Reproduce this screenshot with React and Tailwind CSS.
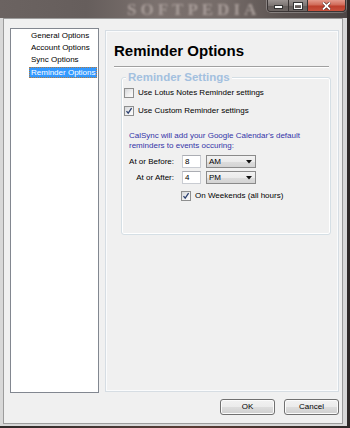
import React from "react";

function Check({ checked }) {
  return (
    <div className="w-[10px] h-[10px] shrink-0 border border-[#8e8f8f] bg-[linear-gradient(135deg,#d4d6d9_0%,#f2f2f2_60%,#fbfbfb_100%)] flex items-center justify-center">
      {checked && (
        <svg width="8" height="8" viewBox="0 0 8 8">
          <path d="M1.5 4.2 L3.2 6.2 L6.6 1.2" fill="none" stroke="#2c4170" strokeWidth="1.3" />
        </svg>
      )}
    </div>
  );
}

function Select({ value }) {
  return (
    <div className="ml-[5px] w-[50px] h-[13px] border border-[#8a8a8a] bg-[linear-gradient(180deg,#f2f2f2_0%,#ebebeb_50%,#dddddd_51%,#d3d3d3_100%)] flex items-center justify-between pl-[2px] pr-[3px]">
      <span>{value}</span>
      <svg width="6" height="4" viewBox="0 0 6 4">
        <path d="M0 0 L6 0 L3 3.5 Z" fill="#111" />
      </svg>
    </div>
  );
}

function Input({ value }) {
  return (
    <div className="ml-[8px] w-[19px] h-[13px] bg-white border border-[#c9ccd2] border-t-[#abadb3] flex items-center pl-[2px]">
      {value}
    </div>
  );
}

function Button({ children }) {
  return (
    <div className="w-[55px] h-[16px] rounded-[3px] border border-[#707070] bg-[linear-gradient(180deg,#f2f2f2_0%,#ebebeb_50%,#dddddd_51%,#cfcfcf_100%)] shadow-[inset_0_0_0_1px_#fbfbfb] flex items-center justify-center">
      {children}
    </div>
  );
}

export default function App() {
  return (
    <div className="w-[350px] h-[428px] overflow-hidden bg-[linear-gradient(90deg,#2f2a29_0%,#4a3a36_35%,#5a3c34_55%,#2e2928_100%)] font-['Liberation_Sans',Arial,sans-serif] text-[8px] leading-[10px] text-black">
      <div className="w-[347px] flex flex-col">
        {/* Title bar */}
        <div className="relative h-[18px] bg-[linear-gradient(90deg,#6b6361_0%,#665e5c_25%,#7b716e_45%,#756b68_65%,#5a5250_82%,#4d4645_100%)] flex justify-end items-start">
          <div className="absolute left-[127px] top-[2px] text-[17px] leading-[15px] font-bold font-['Liberation_Serif',serif] tracking-[4px] text-[#a89d99] blur-[1px]">
            SOFTPEDIA
          </div>
          <div className="relative flex mr-[1px] h-[12px] rounded-b-[4px] border border-t-0 border-[#3a3535] overflow-hidden shadow-[0_0_0_1px_rgba(255,255,255,0.25)]">
            <div className="w-[21px] h-full bg-[linear-gradient(180deg,#9a9391_0%,#7c7573_50%,#625b59_51%,#6e6765_100%)] border-r border-[#3a3535] flex items-center justify-center">
              <div className="w-[7px] h-[2px] bg-white mt-[3px] shadow-[0_0_0_1px_#333]" />
            </div>
            <div className="w-[19px] h-full bg-[linear-gradient(180deg,#9a9391_0%,#7c7573_50%,#625b59_51%,#6e6765_100%)] border-r border-[#3a3535] flex items-center justify-center">
              <div className="w-[8px] h-[6px] border border-white border-t-2 shadow-[0_0_0_1px_#333]" />
            </div>
            <div className="w-[37px] h-full bg-[linear-gradient(180deg,#e49a8c_0%,#d06a58_45%,#bd3f2c_55%,#c8513d_100%)] flex items-center justify-center">
              <svg width="9" height="8" viewBox="0 0 9 8">
                <path d="M1 0.5 L8 7.5 M8 0.5 L1 7.5" stroke="#4a1a12" strokeWidth="3" />
                <path d="M1 0.5 L8 7.5 M8 0.5 L1 7.5" stroke="#ffffff" strokeWidth="1.8" />
              </svg>
            </div>
          </div>
        </div>

        {/* Frame */}
        <div className="border-l-[3px] border-r-[4px] border-b-[2px] border-[#d8d8d8]">
          <div className="h-[406px] border border-[#9c9c9c] bg-[#f0f0f0] flex flex-col pl-[6px] pr-[2px] pt-[9px]">
            <div className="flex items-start">
              {/* List box */}
              <div className="w-[89px] h-[365px] shrink-0 border border-[#828790] bg-white pt-[1px] pl-[18px]">
                {["General Options", "Account Options", "Sync Options"].map((t) => (
                  <div key={t} className="h-[12px] flex items-center">
                    <span className="px-[1px] border border-transparent">{t}</span>
                  </div>
                ))}
                <div className="h-[12px] flex items-center">
                  <span className="px-[1px] leading-[9px] bg-[#3399ff] text-white border border-dotted border-[#b07a40]">
                    Reminder Options
                  </span>
                </div>
              </div>

              {/* Right panel */}
              <div className="ml-[6px] mt-[2px] w-[234px] h-[362px] border border-[#d6dde3] shadow-[inset_0_0_0_1px_#fafbfc] pt-[11px] pl-[8px]">
                <div className="text-[15px] leading-[18px] font-bold">Reminder Options</div>
                <div className="mt-[6px] w-[215px] h-[2px] border-t border-[#a0a0a0] border-b border-b-white" />

                {/* Group box */}
                <div className="relative mt-[9px] ml-[7px] w-[210px] h-[158px] border border-[#d5dfe5] rounded-[3px] shadow-[inset_0_0_0_1px_#ffffff] pt-[9px]">
                  <div className="absolute left-[4px] top-[-7px] px-[2px] bg-[#f0f0f0] text-[11.5px] leading-[13px] font-bold text-[#a3c0df]">
                    Reminder Settings
                  </div>
                  <div className="h-[12px] flex items-center pl-[2px]">
                    <Check />
                    <span className="ml-[4px]">Use Lotus Notes Reminder settings</span>
                  </div>
                  <div className="mt-[6px] h-[12px] flex items-center pl-[2px]">
                    <Check checked />
                    <span className="ml-[4px]">Use Custom Reminder settings</span>
                  </div>
                  <div className="mt-[14px] pl-[7px] text-[#3434a8]">
                    <div>CalSync will add your Google Calendar's default</div>
                    <div>reminders to events occuring:</div>
                  </div>
                  <div className="mt-[4px] h-[13px] flex items-center pl-[7px]">
                    <div className="w-[45px] text-right whitespace-nowrap">At or Before:</div>
                    <Input value="8" />
                    <Select value="AM" />
                  </div>
                  <div className="mt-[3px] h-[13px] flex items-center pl-[7px]">
                    <div className="w-[45px] text-right whitespace-nowrap">At or After:</div>
                    <Input value="4" />
                    <Select value="PM" />
                  </div>
                  <div className="mt-[6px] h-[12px] flex items-center pl-[59px]">
                    <Check checked />
                    <span className="ml-[4px]">On Weekends (all hours)</span>
                  </div>
                </div>
              </div>
            </div>

            {/* Buttons */}
            <div className="mt-[6px] flex justify-end gap-[9px] pr-[1px]">
              <Button>OK</Button>
              <Button>Cancel</Button>
            </div>
          </div>
        </div>
      </div>
    </div>
  );
}
